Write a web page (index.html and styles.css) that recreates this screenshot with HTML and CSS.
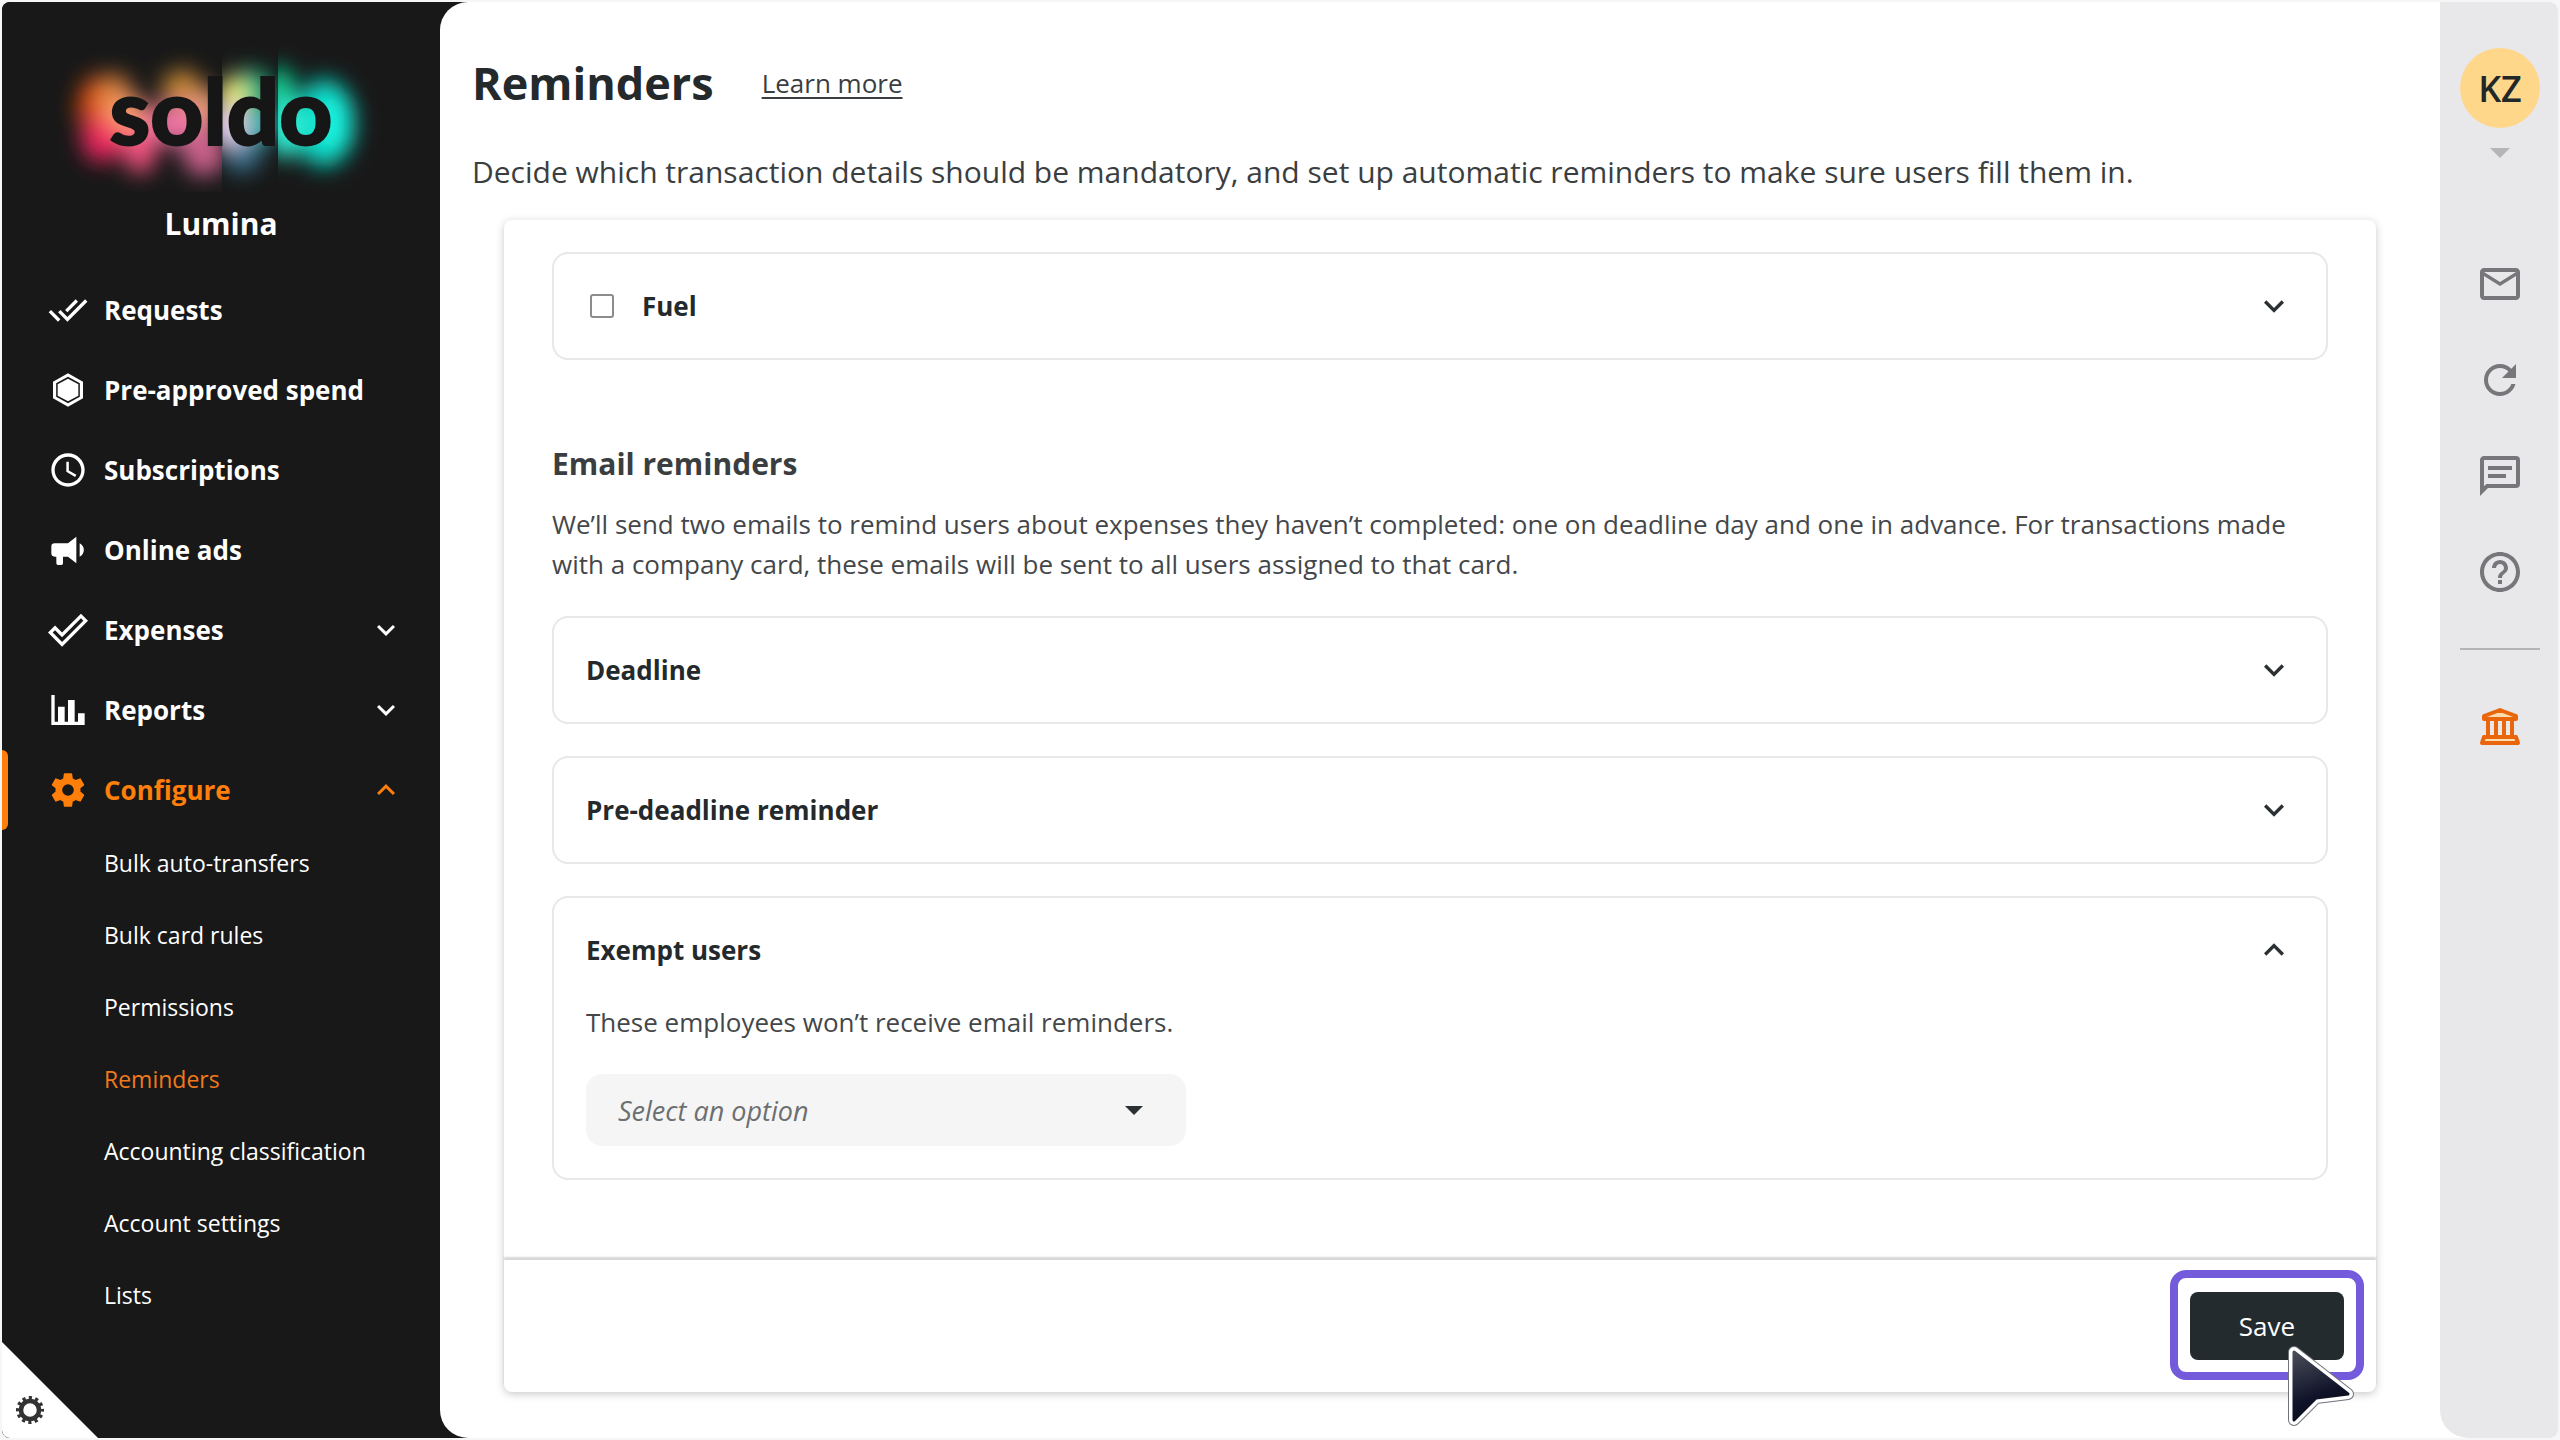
FILE: index.html
```html
<!DOCTYPE html>
<html lang="en">
<head>
    <meta charset="UTF-8">
    <meta name="viewport" content="width=device-width, initial-scale=1.0">
    <title>Soldo - Reminders</title>
    <link rel="stylesheet" href="styles.css">
</head>
<body>
    <div class="app">
        <aside class="sidebar">
            <div class="logo">
                <svg class="logo-glow" viewBox="0 0 438 190" aria-hidden="true">
                    <defs>
                        <filter id="soft" x="-50%" y="-50%" width="200%" height="200%">
                            <feGaussianBlur stdDeviation="11"/>
                        </filter>
                        <clipPath id="clipL"><rect x="0" y="0" width="220" height="190"/></clipPath>
                        <clipPath id="clipD"><rect x="220" y="0" width="56" height="190"/></clipPath>
                        <clipPath id="clipO"><rect x="276" y="0" width="162" height="190"/></clipPath>
                    </defs>
                    <g clip-path="url(#clipL)">
                        <g filter="url(#soft)">
                            <ellipse cx="96" cy="106" rx="20" ry="32" fill="#e0480c"/>
                            <ellipse cx="112" cy="94" rx="18" ry="22" fill="#dc823a"/>
                            <ellipse cx="180" cy="88" rx="20" ry="20" fill="#cc8a34"/>
                            <ellipse cx="100" cy="138" rx="20" ry="22" fill="#f02862"/>
                            <ellipse cx="138" cy="136" rx="18" ry="36" fill="#f85482"/>
                            <ellipse cx="178" cy="122" rx="34" ry="20" fill="#ee74a4"/>
                            <ellipse cx="202" cy="150" rx="22" ry="24" fill="#cc628c"/>
                            <ellipse cx="124" cy="112" rx="20" ry="18" fill="#ffa070"/>
                            <ellipse cx="206" cy="106" rx="14" ry="18" fill="#f0a07c"/>
                        </g>
                    </g>
                    <g clip-path="url(#clipD)">
                        <g filter="url(#soft)">
                            <ellipse cx="248" cy="88" rx="22" ry="20" fill="#1ac08a"/>
                            <ellipse cx="230" cy="94" rx="14" ry="18" fill="#fff67c"/>
                            <ellipse cx="240" cy="148" rx="20" ry="22" fill="#3a7896"/>
                            <ellipse cx="226" cy="124" rx="20" ry="20" fill="#ecd6f0"/>
                            <ellipse cx="262" cy="122" rx="18" ry="16" fill="#18c0bc"/>
                        </g>
                    </g>
                    <g clip-path="url(#clipO)">
                        <g filter="url(#soft)">
                            <ellipse cx="278" cy="100" rx="14" ry="36" fill="#0fe8a4"/>
                            <ellipse cx="322" cy="121" rx="30" ry="44" fill="#0cd8c4"/>
                            <ellipse cx="282" cy="126" rx="18" ry="30" fill="#30f4d8"/>
                            <ellipse cx="334" cy="121" rx="16" ry="30" fill="#14f8e4"/>
                        </g>
                    </g>
                </svg>
                <span class="logo-text">soldo</span>
            </div>
            <p class="company">Lumina</p>

            <nav class="nav">
                <a href="#" class="nav-item">
                    <svg class="nav-icon" viewBox="0 0 24 24"><path d="M18 7l-1.41-1.41-6.34 6.34 1.41 1.41L18 7zm4.24-1.41L11.66 16.17 7.48 12l-1.41 1.41L11.66 19l12-12-1.42-1.41zM.41 13.41L6 19l1.41-1.41L1.83 12 .41 13.41z"/></svg>
                    <span>Requests</span>
                </a>
                <a href="#" class="nav-item">
                    <svg class="nav-icon" viewBox="0 0 24 24"><path fill-rule="evenodd" d="M12 2l9 5v10l-9 5-9-5V7zM12 4.1L4.9 8v8l7.1 3.9 7.1-3.9V8z"/><path d="M12 5.2l6.2 3.4v6.8L12 18.8l-6.2-3.4V8.6z"/></svg>
                    <span>Pre-approved spend</span>
                </a>
                <a href="#" class="nav-item">
                    <svg class="nav-icon" viewBox="0 0 24 24"><path d="M12 2C6.5 2 2 6.5 2 12s4.5 10 10 10 10-4.5 10-10S17.5 2 12 2zm0 18c-4.42 0-8-3.58-8-8s3.58-8 8-8 8 3.58 8 8-3.58 8-8 8zm.5-13H11v6l5.25 3.15.75-1.23-4.5-2.67z"/></svg>
                    <span>Subscriptions</span>
                </a>
                <a href="#" class="nav-item">
                    <svg class="nav-icon" viewBox="0 0 24 24"><path d="M12,8H4A2,2 0 0,0 2,10V14A2,2 0 0,0 4,16H5V20A1,1 0 0,0 6,21H8A1,1 0 0,0 9,20V16H12L17,20V4L12,8M21.5,12C21.5,13.71 20.54,15.26 19,16V8C20.53,8.75 21.5,10.3 21.5,12Z"/></svg>
                    <span>Online ads</span>
                </a>
                <a href="#" class="nav-item">
                    <svg class="nav-icon" viewBox="0 0 24 24"><path d="M19.78,2.2L24,6.44L8.44,22L0,13.55L4.22,9.33L8.44,13.55L19.78,2.2M19.78,5L8.44,16.36L4.22,12.19L2.81,13.55L8.44,19.17L21.19,6.44L19.78,5Z"/></svg>
                    <span>Expenses</span>
                    <svg class="nav-chevron" viewBox="0 0 24 24"><path d="M7.41 8.59L12 13.17l4.59-4.58L18 10l-6 6-6-6z"/></svg>
                </a>
                <a href="#" class="nav-item">
                    <svg class="nav-icon" viewBox="0 0 24 24"><path d="M22,21H2V3H4V19H6V10H10V19H12V6H16V19H18V14H22V21Z"/></svg>
                    <span>Reports</span>
                    <svg class="nav-chevron" viewBox="0 0 24 24"><path d="M7.41 8.59L12 13.17l4.59-4.58L18 10l-6 6-6-6z"/></svg>
                </a>
                <a href="#" class="nav-item active">
                    <svg class="nav-icon" viewBox="0 0 24 24"><path d="M12,15.5A3.5,3.5 0 0,1 8.5,12A3.5,3.5 0 0,1 12,8.5A3.5,3.5 0 0,1 15.5,12A3.5,3.5 0 0,1 12,15.5M19.43,12.97C19.47,12.65 19.5,12.33 19.5,12C19.5,11.67 19.47,11.34 19.43,11L21.54,9.37C21.73,9.22 21.78,8.95 21.66,8.73L19.66,5.27C19.54,5.05 19.27,4.96 19.05,5.05L16.56,6.05C16.04,5.66 15.5,5.32 14.87,5.07L14.5,2.42C14.46,2.18 14.25,2 14,2H10C9.75,2 9.54,2.18 9.5,2.42L9.13,5.07C8.5,5.32 7.96,5.66 7.44,6.05L4.95,5.05C4.73,4.96 4.46,5.05 4.34,5.27L2.34,8.73C2.21,8.95 2.27,9.22 2.46,9.37L4.57,11C4.53,11.34 4.5,11.67 4.5,12C4.5,12.33 4.53,12.65 4.57,12.97L2.46,14.63C2.27,14.78 2.21,15.05 2.34,15.27L4.34,18.73C4.46,18.95 4.73,19.03 4.95,18.95L7.44,17.94C7.96,18.34 8.5,18.68 9.13,18.93L9.5,21.58C9.54,21.82 9.75,22 10,22H14C14.25,22 14.46,21.82 14.5,21.58L14.87,18.93C15.5,18.67 16.04,18.34 16.56,17.94L19.05,18.95C19.27,19.03 19.54,18.95 19.66,18.73L21.66,15.27C21.78,15.05 21.73,14.78 21.54,14.63L19.43,12.97Z"/></svg>
                    <span>Configure</span>
                    <svg class="nav-chevron" viewBox="0 0 24 24"><path d="M7.41 15.41L12 10.83l4.59 4.58L18 14l-6-6-6 6z"/></svg>
                </a>
                <div class="subnav">
                    <a href="#">Bulk auto-transfers</a>
                    <a href="#">Bulk card rules</a>
                    <a href="#">Permissions</a>
                    <a href="#" class="current">Reminders</a>
                    <a href="#">Accounting classification</a>
                    <a href="#">Account settings</a>
                    <a href="#">Lists</a>
                </div>
            </nav>

            <button class="corner" type="button" aria-label="Preferences">
                <svg viewBox="0 0 28 28">
                    <circle cx="14" cy="14" r="9" fill="none" stroke="#333" stroke-width="4.5"/>
                    <circle cx="14" cy="14" r="12" fill="none" stroke="#333" stroke-width="4" stroke-dasharray="3.14 3.143" stroke-dashoffset="1.57"/>
                </svg>
            </button>
        </aside>

        <main class="main">
            <header class="page-header">
                <h1>Reminders</h1>
                <a href="#" class="learn-more">Learn more</a>
            </header>
            <p class="intro">Decide which transaction details should be mandatory, and set up automatic reminders to make sure users fill them in.</p>

            <div class="card">
                <div class="card-body">
                    <section class="panel">
                        <div class="panel-head">
                            <label class="check"><input type="checkbox"> Fuel</label>
                            <button class="toggle" type="button" aria-label="Expand Fuel">
                                <svg viewBox="0 0 24 24"><path d="M7.41 8.59L12 13.17l4.59-4.58L18 10l-6 6-6-6z"/></svg>
                            </button>
                        </div>
                    </section>

                    <h2>Email reminders</h2>
                    <p class="text">We’ll send two emails to remind users about expenses they haven’t completed: one on deadline day and one in advance. For transactions made with a company card, these emails will be sent to all users assigned to that card.</p>

                    <section class="panel">
                        <div class="panel-head">
                            <h3>Deadline</h3>
                            <button class="toggle" type="button" aria-label="Expand Deadline">
                                <svg viewBox="0 0 24 24"><path d="M7.41 8.59L12 13.17l4.59-4.58L18 10l-6 6-6-6z"/></svg>
                            </button>
                        </div>
                    </section>

                    <section class="panel">
                        <div class="panel-head">
                            <h3>Pre-deadline reminder</h3>
                            <button class="toggle" type="button" aria-label="Expand Pre-deadline reminder">
                                <svg viewBox="0 0 24 24"><path d="M7.41 8.59L12 13.17l4.59-4.58L18 10l-6 6-6-6z"/></svg>
                            </button>
                        </div>
                    </section>

                    <section class="panel">
                        <div class="panel-head">
                            <h3>Exempt users</h3>
                            <button class="toggle" type="button" aria-label="Collapse Exempt users">
                                <svg viewBox="0 0 24 24"><path d="M7.41 15.41L12 10.83l4.59 4.58L18 14l-6-6-6 6z"/></svg>
                            </button>
                        </div>
                        <div class="panel-body">
                            <label class="text" for="exempt">These employees won’t receive email reminders.</label>
                            <div class="select">
                                <select id="exempt">
                                    <option>Select an option</option>
                                </select>
                            </div>
                        </div>
                    </section>
                </div>

                <footer class="card-footer">
                    <div class="highlight">
                        <button class="save" type="button">Save</button>
                        <svg class="pointer" viewBox="0 0 72 88" aria-hidden="true">
                            <defs>
                                <linearGradient id="arrow" x1="0" y1="0" x2="0.3" y2="1">
                                    <stop offset="0" stop-color="#4a4c58"/>
                                    <stop offset="0.7" stop-color="#10142a"/>
                                    <stop offset="1" stop-color="#0a0c18"/>
                                </linearGradient>
                            </defs>
                            <path d="M9 8L63 50L31 54L9 76Z" fill="#70727c" stroke="#70727c" stroke-width="12" stroke-linejoin="round"/>
                            <path d="M9 8L63 50L31 54L9 76Z" fill="#fff" stroke="#fff" stroke-width="10" stroke-linejoin="round"/>
                            <path d="M9 8L63 50L31 54L9 76Z" fill="url(#arrow)" stroke="url(#arrow)" stroke-width="3" stroke-linejoin="round"/>
                        </svg>
                    </div>
                </footer>
            </div>
        </main>

        <aside class="rail">
            <button class="avatar" type="button">KZ</button>
            <span class="caret"></span>
            <div class="rail-links">
                <a href="#" aria-label="Messages"><svg viewBox="0 0 24 24"><path d="M22 6c0-1.1-.9-2-2-2H4c-1.1 0-2 .9-2 2v12c0 1.1.9 2 2 2h16c1.1 0 2-.9 2-2V6zm-2 0l-8 5-8-5h16zm0 12H4V8l8 5 8-5v10z"/></svg></a>
                <a href="#" aria-label="Refresh"><svg viewBox="0 0 24 24"><path d="M17.65 6.35C16.2 4.9 14.21 4 12 4c-4.42 0-7.99 3.58-7.99 8s3.57 8 7.99 8c3.73 0 6.84-2.55 7.73-6h-2.08c-.82 2.33-3.04 4-5.65 4-3.31 0-6-2.69-6-6s2.69-6 6-6c1.66 0 3.14.69 4.22 1.78L13 11h7V4l-2.35 2.35z"/></svg></a>
                <a href="#" aria-label="Chat"><svg viewBox="0 0 24 24"><path d="M20,2A2,2 0 0,1 22,4V16A2,2 0 0,1 20,18H6L2,22V4C2,2.89 2.9,2 4,2H20M4,4V17.17L5.17,16H20V4H4M6,7H18V9H6V7M6,11H15V13H6V11Z"/></svg></a>
                <a href="#" aria-label="Help"><svg viewBox="0 0 24 24"><path d="M11 18h2v-2h-2v2zm1-16C6.48 2 2 6.48 2 12s4.48 10 10 10 10-4.48 10-10S17.52 2 12 2zm0 18c-4.41 0-8-3.59-8-8s3.59-8 8-8 8 3.59 8 8-3.59 8-8 8zm0-14c-2.21 0-4 1.79-4 4h2c0-1.1.9-2 2-2s2 .9 2 2c0 2-3 1.75-3 5h2c0-2.25 3-2.5 3-5 0-2.21-1.79-4-4-4z"/></svg></a>
            </div>
            <a href="#" class="bank" aria-label="Account">
                <svg viewBox="0 0 48 48">
                    <g fill="#fcdcae" stroke="#ea660c" stroke-width="4" stroke-linejoin="round">
                        <path d="M24 8L40 14V17H8V14Z"/>
                        <path d="M8 35H40L42 41H6Z"/>
                        <path d="M12 19V34M20 19V34M28 19V34M36 19V34"/>
                    </g>
                </svg>
            </a>
        </aside>
    </div>
</body>
</html>
```
FILE: styles.css
```css
* {
    box-sizing: border-box;
}

body {
    margin: 0;
    padding: 2px;
    background: #f6f6f7;
    font-family: 'Open Sans', 'Noto Sans', sans-serif;
    font-size: 26px;
    line-height: 40px;
    color: #3b3e40;
}

h1, h2, h3, p {
    margin: 0;
}

a {
    color: inherit;
    text-decoration: none;
}

button {
    border: 0;
    padding: 0;
    font-family: inherit;
    cursor: pointer;
}

svg {
    display: block;
}

.app {
    display: flex;
    min-height: calc(100vh - 4px);
    border-radius: 8px;
    overflow: hidden;
    background: linear-gradient(90deg, #181818 50%, #fff 50%);
}

/* Sidebar */
.sidebar {
    position: relative;
    flex: 0 0 438px;
    background: #181818;
    color: #fff;
}

.logo {
    position: relative;
    height: 190px;
}

.logo-glow {
    width: 100%;
}

.logo-text {
    position: absolute;
    left: 0;
    right: 0;
    top: 58px;
    text-align: center;
    font-family: Lato, sans-serif;
    font-weight: 900;
    font-size: 92px;
    line-height: 100px;
    color: #161616;
    -webkit-text-stroke: 2px #161616;
}

.company {
    margin-top: 12px;
    text-align: center;
    font-size: 30px;
    font-weight: 700;
}

.nav {
    padding-top: 26px;
}

.nav-item {
    display: flex;
    align-items: center;
    gap: 16px;
    height: 80px;
    padding: 0 36px 0 46px;
    font-weight: 700;
}

.nav-icon {
    width: 40px;
    height: 40px;
    fill: currentColor;
}

.nav-chevron {
    width: 36px;
    height: 36px;
    margin-left: auto;
    fill: currentColor;
}

.nav-item.active {
    position: relative;
    color: #ff7f0a;
}

.nav-item.active::before {
    content: '';
    position: absolute;
    left: 0;
    top: 0;
    width: 6px;
    height: 80px;
    border-radius: 0 6px 6px 0;
    background: #ff7f0a;
}

.subnav {
    display: flex;
    flex-direction: column;
    gap: 6px;
    padding-left: 102px;
    font-size: 23px;
    line-height: 66px;
}

.subnav .current {
    color: #ee7a1c;
}

.corner {
    position: absolute;
    left: 0;
    bottom: 0;
    display: flex;
    align-items: flex-start;
    width: 96px;
    height: 96px;
    padding: 54px 0 0 14px;
    background: #fff;
    clip-path: polygon(0 0, 100% 100%, 0 100%);
}

.corner svg {
    width: 28px;
    height: 28px;
}

/* Main */
.main {
    flex: 1;
    min-width: 0;
    padding: 56px 64px 46px 32px;
    background: #fff;
    border-radius: 28px 0 0 28px;
}

.page-header {
    display: flex;
    align-items: center;
    gap: 48px;
}

h1 {
    font-size: 45px;
    line-height: 50px;
    font-weight: 700;
    color: #24292c;
}

.learn-more {
    text-decoration: underline;
    text-decoration-thickness: 2px;
    text-underline-offset: 4px;
}

.intro {
    margin-top: 44px;
    font-size: 30px;
}

.card {
    margin: 28px 0 0 32px;
    border-radius: 8px;
    box-shadow: 0 2px 8px rgba(0, 0, 0, 0.22);
}

.card-body {
    padding: 32px 48px 80px;
}

.panel {
    border: 2px solid #e8e8e8;
    border-radius: 16px;
    color: #24292c;
}

.panel + .panel {
    margin-top: 32px;
}

.panel-head {
    display: flex;
    align-items: center;
    justify-content: space-between;
    height: 104px;
    padding: 0 32px;
    font-weight: 700;
}

h3 {
    font-size: 26px;
}

.check {
    display: flex;
    align-items: center;
    gap: 28px;
    padding-left: 4px;
}

.check input {
    appearance: none;
    width: 24px;
    height: 24px;
    margin: 0;
    border: 2px solid #8c8c8c;
    border-radius: 3px;
    background: #fff;
}

.toggle {
    width: 40px;
    height: 40px;
    background: none;
}

.toggle svg {
    fill: #2b3033;
}

h2 {
    margin-top: 84px;
    font-size: 30px;
    font-weight: 700;
}

.text {
    color: #44474a;
}

p.text {
    margin: 20px 0 32px;
}

.panel-body {
    padding: 0 32px 32px;
}

.select {
    position: relative;
    width: 600px;
    margin-top: 32px;
}

.select select {
    appearance: none;
    display: block;
    width: 100%;
    height: 72px;
    padding: 0 32px;
    border: 0;
    border-radius: 16px;
    background: #f5f5f5;
    font-family: inherit;
    font-size: 27px;
    font-style: italic;
    color: #6c6f71;
}

.select::after {
    content: '';
    position: absolute;
    right: 43px;
    top: 32px;
    border: 9px solid transparent;
    border-top-color: #2b3033;
    border-bottom: 0;
}

.card-footer {
    display: flex;
    justify-content: flex-end;
    padding: 10px 12px 12px;
    border-radius: 0 0 8px 8px;
    box-shadow: 0 -3px 2px rgba(0, 0, 0, 0.16);
}

/* ring round the save button */
.highlight {
    position: relative;
    padding: 14px 12px 12px;
    border: 8px solid #735bdb;
    border-radius: 16px;
}

.save {
    display: block;
    width: 154px;
    height: 68px;
    border-radius: 8px;
    background: #242b2e;
    color: #fff;
    font-size: 26px;
}

.pointer {
    position: absolute;
    left: 107px;
    top: 66px;
    width: 72px;
    height: 88px;
}

/* Right rail */
.rail {
    flex: 0 0 118px;
    display: flex;
    flex-direction: column;
    align-items: center;
    padding: 46px 0 0 2px;
    background: #e8e8ea;
    border-radius: 0 8px 8px 28px;
}

.avatar {
    width: 80px;
    height: 80px;
    border-radius: 50%;
    background: #ffd78a;
    color: #22282a;
    font-size: 36px;
    font-weight: 600;
}

.caret {
    margin-top: 20px;
    border: 10px solid transparent;
    border-top-color: #b5b5b6;
    border-bottom: 0;
}

.rail-links {
    display: flex;
    flex-direction: column;
    gap: 48px;
    margin-top: 102px;
    padding-bottom: 52px;
}

.rail-links svg,
.bank svg {
    width: 48px;
    height: 48px;
    fill: #77777b;
}

.bank {
    display: flex;
    justify-content: center;
    width: 80px;
    padding-top: 52px;
    border-top: 2px solid #b4b4b7;
}
```
